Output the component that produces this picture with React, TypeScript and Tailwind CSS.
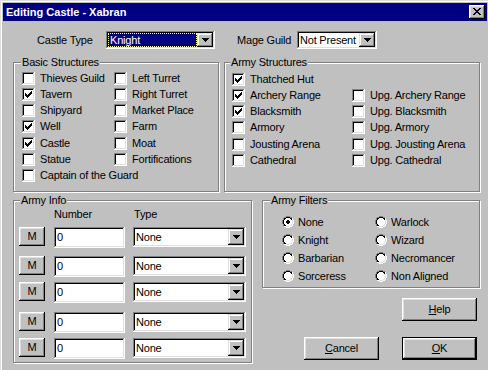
import React from "react";

const RAISED =
  "shadow-[inset_-1px_-1px_#000,inset_1px_1px_#fff,inset_-2px_-2px_#808080,inset_2px_2px_#dfdfdf]";
const RAISED_SB =
  "shadow-[inset_-1px_-1px_#000,inset_1px_1px_#dfdfdf,inset_-2px_-2px_#808080,inset_2px_2px_#fff]";
const SUNKEN =
  "shadow-[inset_-1px_-1px_#fff,inset_1px_1px_#808080,inset_-2px_-2px_#dfdfdf,inset_2px_2px_#000]";

function CheckBox({ checked }: { checked?: boolean }) {
  const pts = [
    [3, 5],
    [4, 6],
    [5, 7],
    [6, 6],
    [7, 5],
    [8, 4],
    [9, 3],
  ];
  return (
    <svg width="13" height="13" viewBox="0 0 13 13" shapeRendering="crispEdges" className="shrink-0 block">
      <rect x="0" y="0" width="13" height="13" fill="#fff" />
      <rect x="0" y="0" width="12" height="1" fill="#808080" />
      <rect x="0" y="0" width="1" height="12" fill="#808080" />
      <rect x="1" y="1" width="10" height="1" fill="#000" />
      <rect x="1" y="1" width="1" height="10" fill="#000" />
      <rect x="1" y="11" width="11" height="1" fill="#dfdfdf" />
      <rect x="11" y="1" width="1" height="11" fill="#dfdfdf" />
      {checked &&
        pts.map(([x, y]) => <rect key={x} x={x} y={y} width="1" height="3" fill="#000" />)}
    </svg>
  );
}

function px(list: number[][], fill: string, key: string) {
  return list.map(([x, y, w, h], i) => (
    <rect key={key + i} x={x} y={y} width={w} height={h} fill={fill} />
  ));
}

function Radio({ checked }: { checked?: boolean }) {
  const gray = [
    [4, 0, 4, 1],
    [2, 1, 2, 1],
    [8, 1, 2, 1],
    [1, 2, 1, 2],
    [0, 4, 1, 4],
    [1, 8, 1, 2],
  ];
  const white = [
    [10, 2, 1, 2],
    [11, 4, 1, 4],
    [10, 8, 1, 2],
    [8, 10, 2, 1],
    [4, 11, 4, 1],
    [2, 10, 2, 1],
  ];
  const black = [
    [4, 1, 4, 1],
    [2, 2, 2, 1],
    [8, 2, 2, 1],
    [2, 3, 1, 1],
    [9, 3, 1, 1],
    [1, 4, 1, 4],
    [2, 8, 1, 1],
    [2, 9, 2, 1],
  ];
  const light = [
    [10, 4, 1, 4],
    [9, 8, 1, 1],
    [8, 9, 2, 1],
    [4, 10, 4, 1],
  ];
  const fill = [
    [4, 2, 4, 1],
    [3, 3, 6, 1],
    [2, 4, 8, 4],
    [3, 8, 6, 1],
    [4, 9, 4, 1],
  ];
  const dot = [
    [5, 4, 2, 1],
    [4, 5, 4, 2],
    [5, 7, 2, 1],
  ];
  return (
    <svg width="12" height="12" viewBox="0 0 12 12" shapeRendering="crispEdges" className="shrink-0 block">
      {px(gray, "#808080", "g")}
      {px(white, "#fff", "w")}
      {px(black, "#000", "b")}
      {px(light, "#dfdfdf", "l")}
      {px(fill, "#fff", "f")}
      {checked && px(dot, "#000", "d")}
    </svg>
  );
}

function Arrow() {
  return (
    <svg width="7" height="4" viewBox="0 0 7 4" shapeRendering="crispEdges" className="block">
      <rect x="0" y="0" width="7" height="1" fill="#000" />
      <rect x="1" y="1" width="5" height="1" fill="#000" />
      <rect x="2" y="2" width="3" height="1" fill="#000" />
      <rect x="3" y="3" width="1" height="1" fill="#000" />
    </svg>
  );
}

function CloseX() {
  const r = [
    [0, 0, 2, 1],
    [6, 0, 2, 1],
    [1, 1, 2, 1],
    [5, 1, 2, 1],
    [2, 2, 4, 1],
    [3, 3, 2, 1],
    [2, 4, 4, 1],
    [1, 5, 2, 1],
    [5, 5, 2, 1],
    [0, 6, 2, 1],
    [6, 6, 2, 1],
  ];
  return (
    <svg width="8" height="7" viewBox="0 0 8 7" shapeRendering="crispEdges" className="block">
      {px(r, "#000", "x")}
    </svg>
  );
}

function Combo({
  value,
  className,
  selected,
}: {
  value: string;
  className: string;
  selected?: boolean;
}) {
  return (
    <div className={`${className} ${SUNKEN} bg-white p-[2px] flex`}>
      <div className="flex-1 flex items-center min-w-0 overflow-hidden whitespace-nowrap">
        {selected ? (
          <div className="h-full w-full bg-[#000080] text-white border border-dotted border-[#ffff80] flex items-center pl-[1px]">
            {value}
          </div>
        ) : (
          <span className="pl-[1px]">{value}</span>
        )}
      </div>
      <div className={`w-[16px] shrink-0 h-full bg-[#c0c0c0] ${RAISED_SB} flex items-center justify-center`}>
        <Arrow />
      </div>
    </div>
  );
}

function Check({ label, checked }: { label?: string; checked?: boolean }) {
  if (!label) return <div />;
  return (
    <div className="flex items-center h-[16.25px] whitespace-nowrap">
      <CheckBox checked={checked} />
      <span className="ml-[5px]">{label}</span>
    </div>
  );
}

function RadioItem({ label, checked }: { label: string; checked?: boolean }) {
  return (
    <div className="flex items-center h-[18px] whitespace-nowrap">
      <Radio checked={checked} />
      <span className="ml-[4px]">{label}</span>
    </div>
  );
}

function Group({
  label,
  className,
  labelClass,
  children,
}: {
  label: string;
  className: string;
  labelClass: string;
  children: React.ReactNode;
}) {
  return (
    <div
      className={`relative border border-[#808080] shadow-[inset_1px_1px_#fff,1px_1px_#fff] ${className}`}
    >
      <span className={`absolute -top-[7px] ${labelClass} bg-[#c0c0c0] px-[1px] leading-[13px] whitespace-nowrap`}>
        {label}
      </span>
      {children}
    </div>
  );
}

function Btn({ children, className }: { children: React.ReactNode; className: string }) {
  return (
    <div className={`${className} bg-[#c0c0c0] ${RAISED} flex items-center justify-center`}>
      {children}
    </div>
  );
}

function ArmyRow({ mt }: { mt: string }) {
  return (
    <div className={`flex items-start pl-[5px] ${mt}`}>
      <Btn className="w-[26px] h-[19px]">M</Btn>
      <div className={`ml-[9px] w-[71px] h-[21px] bg-white ${SUNKEN} flex items-center pl-[3px]`}>0</div>
      <Combo value="None" className="ml-[8px] w-[113px] h-[20px]" />
    </div>
  );
}

export default function App() {
  return (
    <div className="w-[488px] h-[370px] overflow-hidden bg-[#c0c0c0] border-t border-l border-[#dfdfdf] font-['Liberation_Sans',Arial,sans-serif] text-[11px] leading-[13px] tracking-[-0.2px] text-black">
      <div className="h-full border-t border-l border-white pt-[1px] pl-[1px] pr-[1px]">
        {/* Title bar */}
        <div className="h-[18px] bg-[#000080] flex items-start">
          <div className="flex-1 pl-[3px] pt-[2px] text-white font-bold text-[11px] leading-[14px] tracking-normal">
            Editing Castle - Xabran
          </div>
          <div className={`mt-[2px] mr-[2px] w-[16px] h-[14px] bg-[#c0c0c0] ${RAISED} flex items-start pt-[3px] pl-[4px]`}>
            <CloseX />
          </div>
        </div>

        {/* Content */}
        <div className="flex flex-col">
          {/* Row 1 */}
          <div className="mt-[10px] h-[18px] flex items-center">
            <div className="ml-[34px] w-[69px]">Castle Type</div>
            <Combo value="Knight" selected className="w-[109px] h-[18px]" />
            <div className="ml-[22px] w-[60px]">Mage Guild</div>
            <Combo value="Not Present" className="w-[80px] h-[18px]" />
          </div>

          {/* Row 2 */}
          <div className="mt-[13px] flex items-start">
            <Group
              label="Basic Structures"
              labelClass="left-[7px]"
              className="ml-[10px] w-[206px] h-[130px] pl-[8px] pt-[7px]"
            >
              <div className="grid grid-cols-[92px_1fr]">
                <Check label="Thieves Guild" />
                <Check label="Left Turret" />
                <Check label="Tavern" checked />
                <Check label="Right Turret" />
                <Check label="Shipyard" />
                <Check label="Market Place" />
                <Check label="Well" checked />
                <Check label="Farm" />
                <Check label="Castle" checked />
                <Check label="Moat" />
                <Check label="Statue" />
                <Check label="Fortifications" />
                <div className="col-span-2">
                  <Check label="Captain of the Guard" />
                </div>
              </div>
            </Group>
            <Group
              label="Army Structures"
              labelClass="left-[5px]"
              className="ml-[5px] w-[256px] h-[130px] pl-[7px] pt-[8px]"
            >
              <div className="grid grid-cols-[120px_1fr]">
                <Check label="Thatched Hut" checked />
                <Check />
                <Check label="Archery Range" checked />
                <Check label="Upg. Archery Range" />
                <Check label="Blacksmith" checked />
                <Check label="Upg. Blacksmith" />
                <Check label="Armory" />
                <Check label="Upg. Armory" />
                <Check label="Jousting Arena" />
                <Check label="Upg. Jousting Arena" />
                <Check label="Cathedral" />
                <Check label="Upg. Cathedral" />
              </div>
            </Group>
          </div>

          {/* Row 3 */}
          <div className="mt-[8px] flex items-start">
            <Group
              label="Army Info"
              labelClass="left-[6px]"
              className="ml-[10px] w-[239px] h-[163px]"
            >
              <div className="mt-[7px] h-[13px] flex">
                <span className="ml-[40px] w-[80px]">Number</span>
                <span>Type</span>
              </div>
              <ArmyRow mt="mt-[6px]" />
              <ArmyRow mt="mt-[8px]" />
              <ArmyRow mt="mt-[5px]" />
              <ArmyRow mt="mt-[9px]" />
              <ArmyRow mt="mt-[5px]" />
            </Group>

            <div className="ml-[10px] w-[218px] flex flex-col">
              <Group
                label="Army Filters"
                labelClass="left-[7px]"
                className="w-[218px] h-[88px] pl-[19px] pt-[12px]"
              >
                <div className="grid grid-cols-[93px_1fr]">
                  <RadioItem label="None" checked />
                  <RadioItem label="Warlock" />
                  <RadioItem label="Knight" />
                  <RadioItem label="Wizard" />
                  <RadioItem label="Barbarian" />
                  <RadioItem label="Necromancer" />
                  <RadioItem label="Sorceress" />
                  <RadioItem label="Non Aligned" />
                </div>
              </Group>
              <div className="mt-[10px] flex">
                <Btn className="ml-[140px] w-[75px] h-[23px]">
                  <span>
                    <span className="underline">H</span>elp
                  </span>
                </Btn>
              </div>
              <div className="mt-[16px] flex">
                <Btn className="ml-[42px] w-[75px] h-[23px]">
                  <span>
                    <span className="underline">C</span>ancel
                  </span>
                </Btn>
                <div className="ml-[23px] w-[75px] h-[23px] border border-black flex">
                  <Btn className="w-full h-full">
                    <span>
                      <span className="underline">O</span>K
                    </span>
                  </Btn>
                </div>
              </div>
            </div>
          </div>
        </div>
      </div>
    </div>
  );
}
